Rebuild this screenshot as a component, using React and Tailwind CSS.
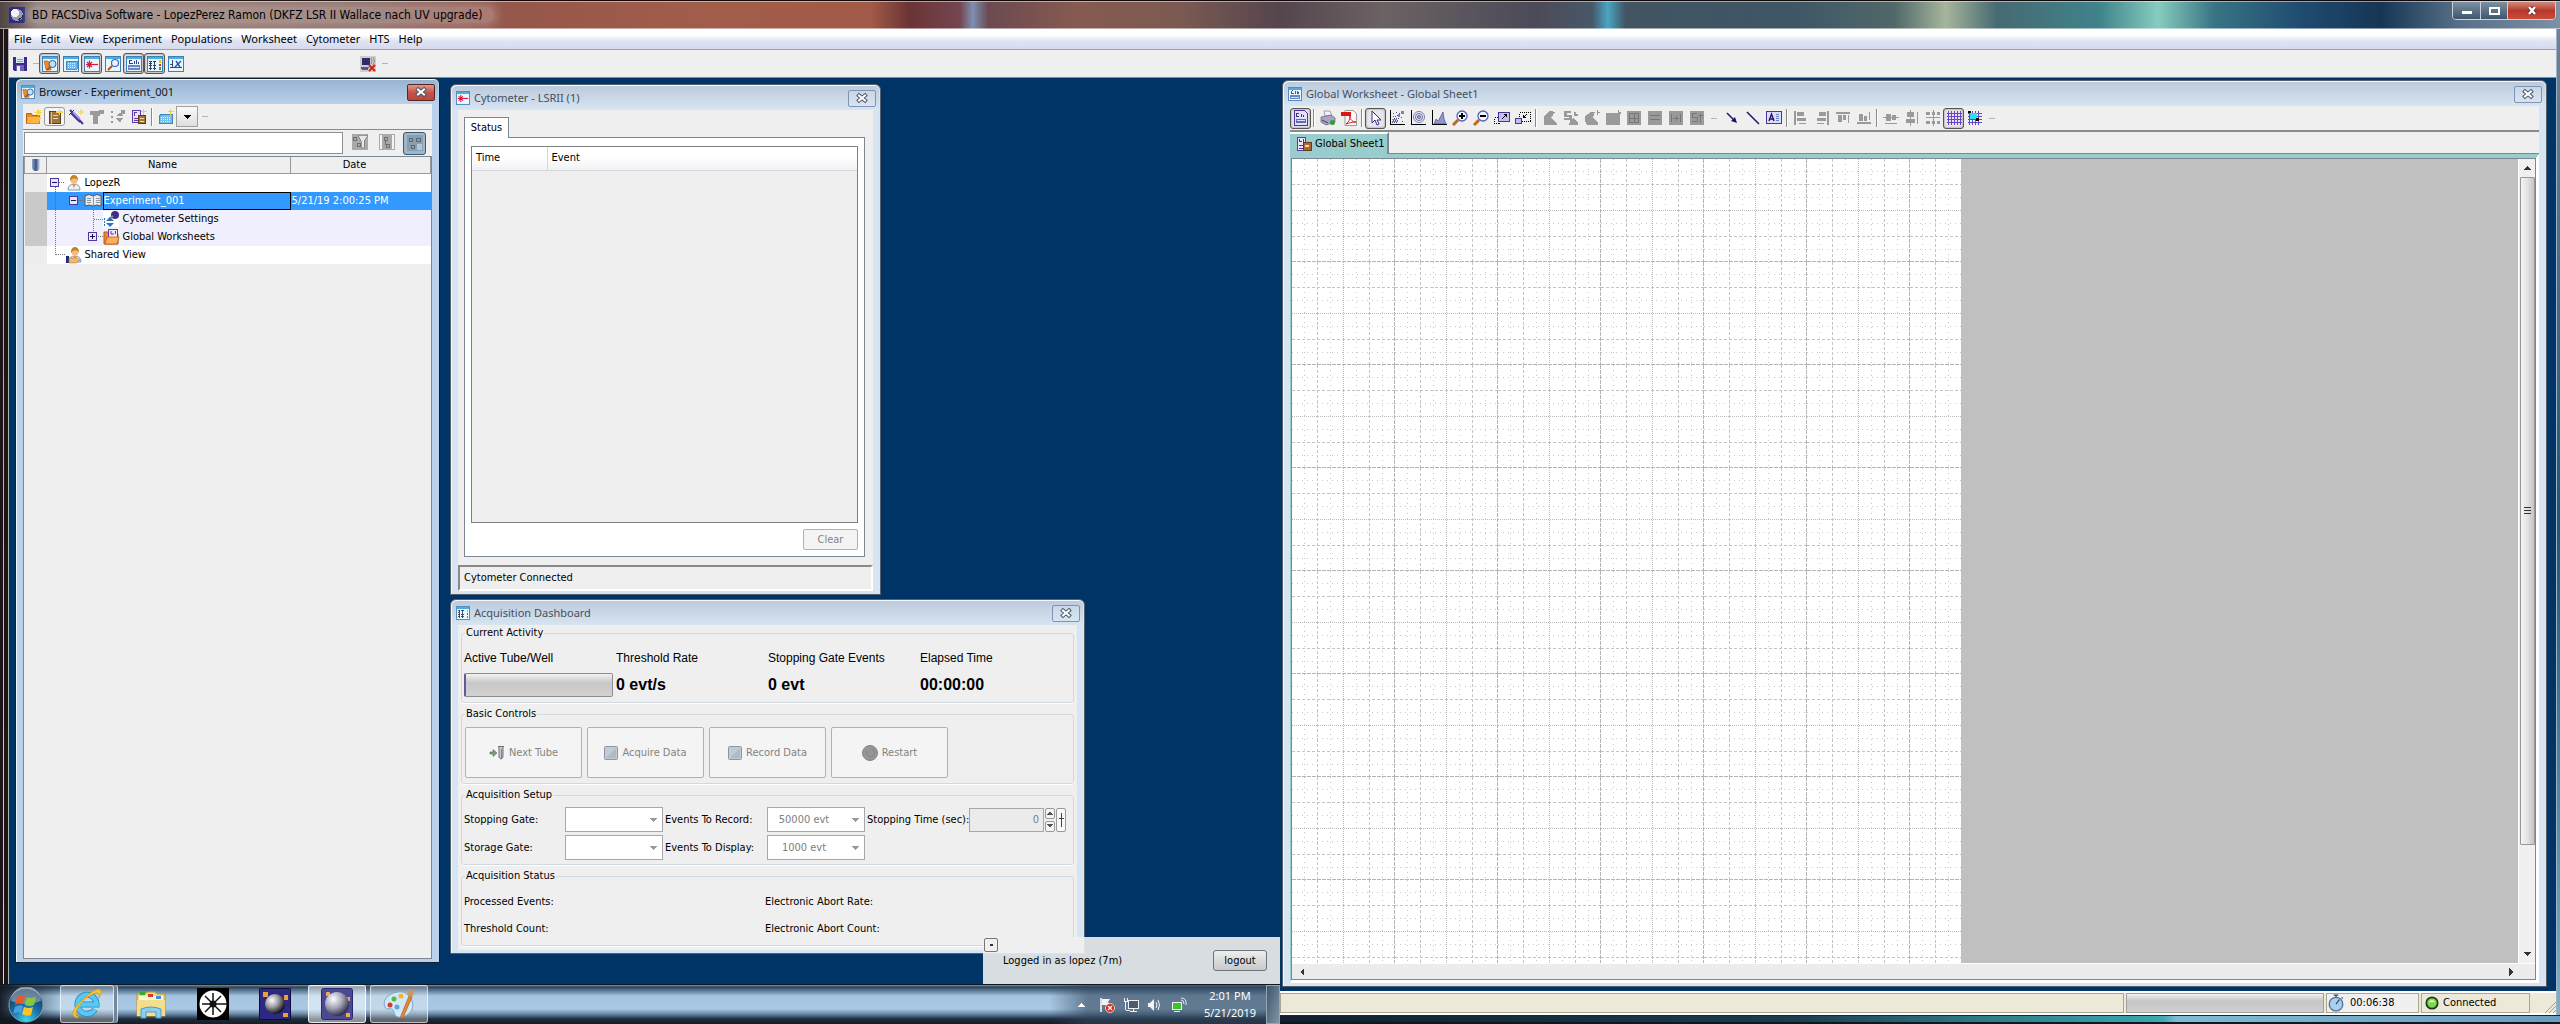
import React from 'react';

/* ---------- small drawing helpers ---------- */

function Ico({ size = 16, box = 16, crisp = true, className = '', children }) {
  return (
    <svg
      aria-hidden="true"
      width={size}
      height={size}
      viewBox={`0 0 ${box} ${box}`}
      shapeRendering={crisp ? 'crispEdges' : 'auto'}
      fill="none"
      className={`shrink-0 ${className}`}
    >
      {children}
    </svg>
  );
}

const Panel = ({ children }) => (
  <>
    <rect x="0.5" y="0.5" width="15" height="15" fill="#eaf6fd" stroke="#3f7fb4" />
    <rect x="1" y="1" width="14" height="2" fill="#43b0e6" />
    {children}
  </>
);

const GRAY = '#9a9a9a';

const icons = {
  diva: (
    <>
      <rect width="16" height="16" rx="2" fill="#2b2b88" />
      <circle cx="8" cy="8" r="6" fill="#9a9aa8" />
      <circle cx="6" cy="6" r="4" fill="#f2f2f8" />
      <path d="M9 13a6 6 0 0 0 5-6c0 3-4 4-5 6z" fill="#222" />
    </>
  ),
  save: (
    <>
      <path d="M1 1h14v14H2l-1-1z" fill="#3b2a86" />
      <rect x="4" y="1" width="8" height="6" fill="#dceaf4" />
      <path d="M5 3h6M5 5h6" stroke="#7fa6b8" />
      <rect x="4" y="9" width="8" height="6" fill="#6f62b4" />
      <rect x="5" y="10" width="3" height="5" fill="#eee" />
    </>
  ),
  browser: (
    <Panel>
      <g shapeRendering="auto">
        <path d="M2 5h4l1 2h2v7H4z" fill="#f08a24" stroke="#b85a10" strokeWidth="0.6" />
        <path d="M8 11l-3 3" stroke="#a85a18" strokeWidth="2" />
        <circle cx="10.500" cy="8" r="3.500" fill="#bfe0f8" stroke="#3a5a8a" />
      </g>
    </Panel>
  ),
  plate: (
    <Panel>
      <path d="M4 5h10v8H3V7z" fill="#6fb7e8" stroke="#2f7ab8" strokeWidth="0.8" />
      <path d="M5 7h8M5 9h8M5 11h8" stroke="#d9f0ff" strokeDasharray="1 1" />
    </Panel>
  ),
  laser: (
    <Panel>
      <g shapeRendering="auto">
        <path d="M2 8.500h12" stroke="#e0133c" strokeWidth="1.200" />
        <path d="M5.500 4.500v8M3 6l5 5M8 6l-5 5" stroke="#e0133c" strokeWidth="1.200" />
      </g>
    </Panel>
  ),
  inspect: (
    <Panel>
      <g shapeRendering="auto">
        <circle cx="10" cy="7" r="3.500" fill="#e4f3ff" stroke="#4a62c0" strokeWidth="1.200" />
        <path d="M7 10l-4 4" stroke="#a65420" strokeWidth="2" />
      </g>
    </Panel>
  ),
  sheet: (
    <Panel>
      <path d="M3.500 4v4M4 4.500h2M4 7.500h3M8.500 8V5M10.500 8V4M12.500 8V6" stroke="#3a3a9c" />
      <rect x="2" y="9" width="12" height="5" fill="#6c86c4" />
      <path d="M3 11.500h10" stroke="#dce6f8" />
    </Panel>
  ),
  dash: (
    <Panel>
      <path d="M2 5.500h3M6 5.500h3M2 7.500h1M4 7.500h1M2 9.500h3M6 9.500h3M6 12.500h3M2 12.500h3M3.500 5v9M7.500 5v9" stroke="#30405a" />
      <rect x="12" y="4" width="2" height="3" fill="#e0c020" />
      <rect x="12" y="8" width="2" height="2" fill="#d03030" />
      <rect x="12" y="11" width="2" height="3" fill="#35a835" />
    </Panel>
  ),
  bio: (
    <Panel>
      <path d="M4.500 4v8M2 11.500h12M2 8.500h3" stroke="#2f4a8c" />
      <path d="M8 5l4 6M13 5l-6 6" stroke="#2454b0" strokeWidth="1.400" shapeRendering="auto" />
    </Panel>
  ),
  modem: (
    <>
      <rect width="16" height="16" fill="#cfcbc6" />
      <rect x="2" y="2" width="8" height="7" fill="#2c2c6e" />
      <path d="M1 11h8l-1 3H2z" fill="#565690" />
      <path d="M11 2q2 3 0 6M13 1q3 4 0 8" stroke="#8a8a8a" shapeRendering="auto" />
      <path d="M9 9l6 6M15 9l-6 6" stroke="#d81c1c" strokeWidth="2" shapeRendering="auto" />
    </>
  ),
  folderNew: (
    <g shapeRendering="auto">
      <path d="M0.500 4.500h5l1 2h7v8h-13z" fill="#f08a1c" stroke="#c0600c" />
      <path d="M2 8h13l-2 6.500H1z" fill="#ffb648" />
      <path d="M12.500 0v7M9 3.500h7M10 1l5 5M15 1l-5 5" stroke="#f6d642" />
    </g>
  ),
  bookNew: (
    <>
      <path d="M2.500 2.500h11v12h-11z" fill="#9c7540" stroke="#5e4018" />
      <path d="M4.500 3v12" stroke="#d8c296" />
      <path d="M6 6.500h5M6 9.500h5" stroke="#e8d6b0" />
      <path d="M12.500 0v6M9 3h7" stroke="#f6d642" strokeWidth="1.500" />
    </>
  ),
  syringe: (
    <g shapeRendering="auto">
      <path d="M3 4l9 9M2 1l13 14" stroke="#4a35a0" strokeWidth="2" />
      <path d="M5 3l7 7" stroke="#a99be0" strokeWidth="2" />
      <path d="M1 6l5-5" stroke="#3a2a80" />
      <path d="M13 0v6M10 3h6" stroke="#f2cf36" />
    </g>
  ),
  tubeGray: <path d="M1 2h9V1h5v4h-4v2H9v8H4V6H1z" fill={GRAY} />,
  settingsGray: (
    <path d="M1 2h2v2H1zM1 7h2v2H1zM1 12h2v2H1zM6 7h7l-3-3zM6 9h7l-3 5zM11 1h4v4h-4z" fill={GRAY} />
  ),
  sheetNew: (
    <>
      <path d="M1.500 1.500h8v12h-8z" fill="#e9e4fa" stroke="#5a3aa8" />
      <path d="M3 3.500h3M3.500 4v3M3 9.500h4M3 11.500h4" stroke="#5a3aa8" />
      <path d="M7.500 6.500h7v8h-7z" fill="#a5723a" stroke="#603c12" />
      <path d="M9 9.500h4M9 12.500h4" stroke="#ecd8b0" />
      <path d="M12.500 0v6M10 2.500h6" stroke="#f2cf36" />
    </>
  ),
  plateNew: (
    <>
      <path d="M2.500 5.500h12v9h-13v-7z" fill="#78bfe9" stroke="#3b86bd" />
      <path d="M3 8.500h10M3 10.500h10M3 12.500h10" stroke="#e0f4ff" strokeDasharray="1 1" />
      <path d="M12.500 0v6M10 2.500h6" stroke="#f2cf36" />
    </>
  ),
  filter: (
    <>
      <rect width="16" height="16" fill="#a9a9a9" />
      <path d="M1 3h3v3H1zM5 9h3v3H5z" stroke="#707070" />
      <path d="M6 1h10l-4 6v8l-3-2V7z" fill="#e6e6e6" stroke="#777" strokeWidth="0.700" />
    </>
  ),
  treeGray: (
    <>
      <rect x="0.500" y="0.500" width="15" height="15" fill="#f4f4f4" stroke="#aaa" />
      <rect x="3" y="1" width="10" height="14" fill="#a9a9a9" />
      <path d="M5 3h3v3H5zM7 10h3v3H7zM6 6v5" stroke="#6e6e6e" />
    </>
  ),
  treeBlue: (
    <>
      <rect width="16" height="16" fill="#8c9dab" />
      <path d="M2.500 3.500h3v3h-3zM4.500 10.500h3v3h-3zM9.500 3.500h4v3h-4z" stroke="#566a7a" />
      <path d="M10 9h5v6h-5z" fill="#a9cbe2" />
    </>
  ),
  page: (
    <>
      <path d="M1.500 0.500h10l3 3v12h-13z" fill="#e6e1fa" stroke="#4a34a0" />
      <path d="M3.500 3v4M4 3.500h2M4 6.500h2M8.500 7V4M10.500 7V5" stroke="#3a3490" />
      <rect x="3" y="9" width="10" height="4" fill="#5a6cba" />
      <path d="M4 10.500h8" stroke="#e0e4fa" />
    </>
  ),
  print: (
    <g shapeRendering="auto">
      <path d="M4 1h6l2 5H5z" fill="#f2f0fa" stroke="#8a86a8" strokeWidth="0.800" />
      <path d="M1 7l10-2 4 3v4l-9 3-5-3z" fill="#a8a4c4" stroke="#6a6888" strokeWidth="0.800" />
      <path d="M2 10l6 3" stroke="#444" />
      <circle cx="12.500" cy="12.500" r="2.500" fill="#2aa030" />
    </g>
  ),
  pdf: (
    <g shapeRendering="auto">
      <path d="M4 0.500h8l3.500 3v12H4z" fill="#fafafa" stroke="#999" />
      <rect x="0" y="2" width="10" height="4" fill="#dc1414" />
      <path d="M5 14c3-2 4-5 4-8 0 4 3 6 6 6-4 0-7 1-10 2z" stroke="#d42020" />
    </g>
  ),
  cursor: <path d="M4 1v12l3-3 2 5 2-1-2-4h4z" fill="#fff" stroke="#3a2c90" shapeRendering="auto" />,
  dot: (
    <>
      <path d="M1.500 0v14.500H16" stroke="#000" />
      <path d="M3 12.500h5M4 10.500h6M5 8.500h6M4 6.500h4M8 5.500h4M10 3.500h2M13 2.500h2M12 7.500h2M4 3.500h1M7 2.500h1M13 11.500h1" stroke="#4a4a86" strokeDasharray="1 1" />
      <path d="M3 11.500h6M3 9.500h5" stroke="#8888bc" />
      <path d="M12 1h3v3h-3zM9 4h2v3H9z" fill="#8080b8" />
    </>
  ),
  contour: (
    <>
      <path d="M1.500 0v14.500H16" stroke="#000" />
      <g shapeRendering="auto">
        <circle cx="9" cy="7" r="5.500" stroke="#7c7cb8" />
        <circle cx="9" cy="7" r="3.500" stroke="#6464a8" />
        <circle cx="9" cy="7" r="1.500" fill="#aab0dc" stroke="#6464a8" />
      </g>
    </>
  ),
  hist: (
    <>
      <path d="M3 14l2-5 2 2 3-5 2-4 1 7 2 5z" fill="#8e96d2" stroke="#4a4a96" strokeWidth="0.700" shapeRendering="auto" />
      <path d="M1.500 0v14.500H16" stroke="#000" />
    </>
  ),
  zoomIn: (
    <g shapeRendering="auto">
      <path d="M6 10l-5 5" stroke="#c4661c" strokeWidth="3" />
      <circle cx="10" cy="6" r="5" fill="#eef6ff" stroke="#5a62b8" strokeWidth="1.300" />
      <path d="M7 6h6M10 3v6" stroke="#000" strokeWidth="2" />
    </g>
  ),
  zoomOut: (
    <g shapeRendering="auto">
      <path d="M6 10l-5 5" stroke="#c4661c" strokeWidth="3" />
      <circle cx="10" cy="6" r="5" fill="#eef6ff" stroke="#5a62b8" strokeWidth="1.300" />
      <path d="M7 6h6" stroke="#000" strokeWidth="2" />
    </g>
  ),
  scaleUp: (
    <>
      <path d="M0.500 7.500h5v6h-5z" stroke="#000" strokeDasharray="1 1" />
      <rect x="4.500" y="2.500" width="11" height="9" fill="#c4c0ee" stroke="#4236a0" />
      <path d="M8 9l4-4M10 4.500h3M12.500 4v3" stroke="#000" />
    </>
  ),
  scaleDown: (
    <>
      <path d="M4.500 2.500h11v9h-11z" stroke="#000" strokeDasharray="1 1" />
      <rect x="0.500" y="8.500" width="6" height="5" fill="#c4c0ee" stroke="#4236a0" />
      <path d="M12 4L9 7M8.500 5v3M8 7.500h3" stroke="#000" />
    </>
  ),
  g1: <path d="M2 6l6-5 5 1-4 6 6 5v2H2z" fill={GRAY} />,
  g2: <path d="M1 1h7v2H4v2h5v5H1V8h5V7H1zM11 2h2v2h2v2h-4zM8 9l3-1 4 5v2H6z" fill={GRAY} />,
  g3: <path d="M1 6l6-4h4l-2 6 5 5v2H3l-2-4zM13 0h1v2h2v1h-2v2h-1z" fill={GRAY} />,
  g4: <path d="M1 3h14v12H1zM13 0h1v2h2v2h-3z" fill={GRAY} />,
  g5: (
    <>
      <rect x="1" y="1" width="14" height="14" fill={GRAY} />
      <path d="M3.500 3.500h9v9h-9zM8.500 3v10M3 8.500h10" stroke="#777" />
    </>
  ),
  g6: (
    <>
      <rect x="1" y="1" width="14" height="14" fill={GRAY} />
      <path d="M3 5.500h10M3 9.500h10" stroke="#777" />
    </>
  ),
  g7: (
    <>
      <rect x="1" y="1" width="14" height="14" fill={GRAY} />
      <path d="M3.500 4v8M12.500 4v8M5 8.500h6M8.500 6v5" stroke="#777" />
    </>
  ),
  g8: (
    <>
      <rect x="1" y="1" width="14" height="14" fill={GRAY} />
      <path d="M8 3.500H3.500v4H8v4H3M11.500 3v10M9 5.500h5" stroke="#777" />
    </>
  ),
  arrow: (
    <g shapeRendering="auto">
      <path d="M3 3l7 7" stroke="#241466" strokeWidth="1.500" />
      <path d="M13 13l-6-2 4-4z" fill="#241466" />
    </g>
  ),
  line: <path d="M2 2l12 12" stroke="#241466" strokeWidth="1.500" shapeRendering="auto" />,
  text: (
    <>
      <rect x="0.500" y="1.500" width="15" height="12" fill="#dcdcf8" stroke="#4a34a0" />
      <path d="M3 11l2.500-7L8 11M4 9h4" stroke="#241466" strokeWidth="1.400" shapeRendering="auto" />
      <path d="M10 4.500h3M10 6.500h3M10 8.500h3M10 10.500h3" stroke="#6a80c8" />
    </>
  ),
  a1: <path d="M1 1h2v14H1zM4 2h7v4H4zM4 8h9v3H4zM6 13h7v1H6z" fill={GRAY} />,
  a2: <path d="M13 1h2v14h-2zM5 2h7v4H5zM3 8h9v3H3zM3 13h7v1H3z" fill={GRAY} />,
  a3: <path d="M1 2h14v2H1zM3 5h4v7H3zM8 5h3v5H8zM13 5h1v8h-1z" fill={GRAY} />,
  a4: <path d="M1 12h14v2H1zM3 4h4v7H3zM8 6h3v5H8zM13 2h1v8h-1z" fill={GRAY} />,
  a5: <path d="M3 4h5v7H3zM9 5h4v5H9zM0 7h16v1H0zM2 13h12v1H2z" fill={GRAY} />,
  a6: <path d="M3 2h7v5H3zM2 9h9v4H2zM6 0h1v16H6zM13 2h1v12h-1z" fill={GRAY} />,
  a7: <path d="M1 2h4v3H1zM7 2h3v3H7zM12 2h3v3h-3zM1 7h14v1H1zM1 11h4v3H1zM7 11h3v3H7zM12 11h3v3h-3zM8 0h1v16H8z" fill={GRAY} />,
  grid: <path d="M2.500 1v14M5.500 1v14M8.500 1v14M11.500 1v14M14.500 1v14M1 3.500h15M1 6.500h15M1 9.500h15M1 12.500h15" stroke="#6a44cc" />,
  snap: (
    <>
      <path d="M2.500 1v14M5.500 1v14M8.500 1v14M11.500 1v14M1 3.500h14M1 6.500h14M1 9.500h14M1 12.500h14" stroke="#6a44cc" />
      <rect x="3" y="3" width="7" height="6" fill="#30dcf0" />
      <path d="M1 1h3v2H1zM9 8h3v3H9z" fill="#000" />
    </>
  ),
  sheetTab: (
    <>
      <path d="M1.500 1.500h8v13h-8z" fill="#e9e4fa" stroke="#5a3aa8" />
      <path d="M3.500 3v3M4 5.500h2M7.500 6V3M3 9.500h4M3 12.500h4" stroke="#4a34a0" />
      <path d="M7.500 6.500h8v8h-8z" fill="#b0652c" stroke="#603c12" />
      <path d="M9 9h4v2H9z" fill="#f0d8a0" />
    </>
  ),
};

const I = ({ n, size = 16, className }) => (
  <Ico size={size} className={className}>{icons[n]}</Ico>
);

function ToolBtn({ n, label, pressed, disabled }) {
  return (
    <button
      type="button"
      aria-label={label}
      disabled={disabled}
      className={
        pressed
          ? 'flex h-[21px] w-[21px] shrink-0 items-center justify-center rounded-[3px] border border-[#555] bg-[#e6e6ea] shadow-[inset_0_0_2px_#777]'
          : 'flex h-[21px] w-[21px] shrink-0 items-center justify-center'
      }
    >
      <I n={n} />
    </button>
  );
}

const Sep = () => <span className="mx-[2px] h-[18px] w-[2px] shrink-0 border-l border-[#8a8a8a] bg-white" />;
const Nub = () => <span className="mx-1 h-px w-[6px] shrink-0 bg-[#b4b4b4]" />;

/* ---------- MDI window ---------- */

function CloseBtn({ active }) {
  return (
    <button
      type="button"
      aria-label="Close"
      className={
        active
          ? 'flex h-[17px] w-7 items-center justify-center rounded-[2px] border border-[#5a2420] bg-linear-to-b from-[#dc9a8e] via-[#c4544a] to-[#b8483c]'
          : 'flex h-[17px] w-7 items-center justify-center rounded-[2px] border border-[#7f93b2] bg-linear-to-b from-[#c8d6e6] to-[#d8e4f2]'
      }
    >
      <Ico size={12} box={12} crisp={false}>
        <path d="M3 3.500l6 5M9 3.500l-6 5" stroke="#4a5562" strokeWidth="4" strokeLinecap="square" />
        <path d="M3 3.500l6 5M9 3.500l-6 5" stroke="#fff" strokeWidth="2" strokeLinecap="square" />
      </Ico>
    </button>
  );
}

function Win({ title, icon, active, className, bodyClass, children }) {
  return (
    <section
      aria-label={title}
      className={`flex flex-col rounded-t-md border px-[7px] pb-[3px] shadow-[inset_1px_1px_0_#f4f8fc] ${
        active ? 'border-[#10202c] bg-[#b9d1ea]' : 'border-[#55606c] bg-[#d7e4f2]'
      } ${className}`}
    >
      <header
        className={`-mx-[6px] mt-px flex h-6 shrink-0 items-center rounded-t-[5px] pr-[3px] pl-1 ${
          active ? 'bg-linear-to-b from-[#98b4d2] to-[#b9d1ea]' : 'bg-linear-to-b from-[#bccbdc] to-[#d7e4f2]'
        }`}
      >
        <I n={icon} size={14} />
        <h2
          className={`ml-1 flex-1 font-['Noto_Sans',sans-serif] text-[11px] leading-4 ${
            active ? 'text-[#101820]' : 'text-[#45505c]'
          }`}
        >
          {title}
        </h2>
        <CloseBtn active={active} />
      </header>
      <div className={`flex min-h-0 flex-1 flex-col bg-[#efefef] ${bodyClass || ''}`}>{children}</div>
    </section>
  );
}

/* ---------- top of the application ---------- */

function TitleBar() {
  return (
    <div className="flex h-[29px] shrink-0 items-start border-t border-[#120808] bg-[linear-gradient(90deg,#4f4644_0%,#8d7a76_1.5%,#93766e_8%,#8d6e68_14%,#96564a_20%,#a15d4b_27%,#a35a48_34%,#6b3436_35.5%,#744650_37.5%,#7d8fb0_38%,#6c4a50_38.6%,#865a50_42%,#7c5a52_46%,#54454e_50%,#6b6264_54%,#4c4a58_60%,#485868_62.2%,#4aa4c4_62.8%,#435462_63.5%,#3e5666_70%,#506869_74%,#a6b59c_76%,#476a72_78%,#3f838c_82%,#86ccbe_84.3%,#387484_86.5%,#1f4a70_90%,#163654_93%,#566f88_96%,#7d90a4_100%)] pl-[9px] shadow-[inset_0_1px_0_rgba(255,255,255,0.5),inset_0_-1px_0_rgba(255,255,255,0.5)]">
      <div className="flex h-full flex-1 items-center">
        <I n="diva" />
        <h1 className="ml-[3px] rounded-full bg-white/20 pr-3 pl-1 font-['DejaVu_Sans_Condensed','DejaVu_Sans',sans-serif] text-xs leading-4 text-black shadow-[0_0_10px_4px_rgba(255,255,255,0.2)]">
          BD FACSDiva Software - LopezPerez Ramon (DKFZ LSR II Wallace nach UV upgrade)
        </h1>
      </div>
      <div className="mr-1 flex h-[19px] overflow-hidden rounded-b-[4px] border border-[#c8d2dc]">
        <button type="button" aria-label="Minimize" className="flex w-7 items-center justify-center border-r border-[#c8d2dc] bg-linear-to-b from-[#7d90a4] to-[#3f566c]">
          <span className="mt-1 h-[3px] w-[10px] bg-white" />
        </button>
        <button type="button" aria-label="Restore" className="flex w-[27px] items-center justify-center border-r border-[#c8d2dc] bg-linear-to-b from-[#7d90a4] to-[#3f566c]">
          <span className="h-2 w-[11px] border-2 border-white" />
        </button>
        <button type="button" aria-label="Close" className="flex w-[47px] items-center justify-center bg-linear-to-b from-[#d08a7c] via-[#b8382c] to-[#c84c38]">
          <Ico size={12} box={12} crisp={false}>
            <path d="M3 2l6 7M9 2l-6 7" stroke="#5a2a28" strokeWidth="4" />
            <path d="M3 2l6 7M9 2l-6 7" stroke="#fff" strokeWidth="2.400" />
          </Ico>
        </button>
      </div>
    </div>
  );
}

const MENU = ['File', 'Edit', 'View', 'Experiment', 'Populations', 'Worksheet', 'Cytometer', 'HTS', 'Help'];

function MenuBar() {
  return (
    <nav className="flex h-[21px] shrink-0 items-center gap-[9px] border-b border-[#a0a0a0] bg-linear-to-b from-white from-30% via-[#dfe4f4] via-60% to-[#d6daee] pl-[5px]">
      {MENU.map((m) => (
        <button key={m} type="button" className="font-['Noto_Sans',sans-serif] text-[11px] leading-4">
          {m}
        </button>
      ))}
    </nav>
  );
}

function MainToolbar() {
  return (
    <div className="flex h-7 shrink-0 items-center border-b border-[#8a8a8a] bg-[#efefef] pl-[3px]">
      <button type="button" aria-label="Save" className="flex h-[21px] w-[17px] items-center"><I n="save" /></button>
      <Nub />
      <span className="-ml-1 flex">
        <ToolBtn n="browser" label="Browser" pressed />
        <ToolBtn n="plate" label="Plate" />
        <ToolBtn n="laser" label="Cytometer" pressed />
        <ToolBtn n="inspect" label="Inspector" />
        <ToolBtn n="sheet" label="Worksheet" pressed />
        <ToolBtn n="dash" label="Acquisition Dashboard" pressed />
        <ToolBtn n="bio" label="Biexponential Editor" />
      </span>
      <span className="ml-[171px] flex items-center">
        <ToolBtn n="modem" label="Disconnected" />
        <Nub />
      </span>
    </div>
  );
}

/* ---------- browser ---------- */

const dotted = { stroke: '#777', strokeDasharray: '1 1' };

function Box({ x, plus }) {
  return (
    <>
      <rect x={x - 4.5} y="4.500" width="8" height="8" rx="1" fill="#e9e6fb" stroke="#4a3aa0" />
      <path d={`M${x - 3} 8.500h5`} stroke="#1c1050" />
      {plus && <path d={`M${x - 0.5} 6v5`} stroke="#1c1050" />}
    </>
  );
}

function Person({ x }) {
  return (
    <g transform={`translate(${x} 1)`} shapeRendering="auto">
      <path d="M1 15q0-6 6-6t6 6z" fill="#e8f2fa" stroke="#7a98b4" />
      <path d="M5 9h4l-2 4z" fill="#e89840" />
      <circle cx="7" cy="5" r="3.500" fill="#f2bc84" />
      <path d="M3 6c-1-8 9-8 8 0-1-3-5-4-8 0z" fill="#c08420" />
    </g>
  );
}

const TreeArt = ({ w, children }) => (
  <svg aria-hidden="true" width={w} height="18" viewBox={`0 0 ${w} 18`} fill="none" shapeRendering="crispEdges" className="shrink-0">
    {children}
  </svg>
);

const ROWS = [
  {
    name: 'LopezR', bg: 'bg-white', mark: 'bg-[#ededed]',
    art: (
      <TreeArt w="36">
        <path d="M12 8.500h6M8.500 13v5" {...dotted} />
        <Box x={8} />
        <Person x={20} />
      </TreeArt>
    ),
  },
  {
    name: 'Experiment_001', date: '5/21/19 2:00:25 PM', bg: 'bg-[#3399ff] text-white', mark: 'bg-[#c9c9c9]', selected: true,
    art: (
      <TreeArt w="56">
        <path d="M8.500 0v18M31 8.500h6" stroke="#5c6c88" strokeDasharray="1 1" />
        <Box x={27} />
        <path d="M38 14V4q4-3 8 0 4-3 8 0v10q-4-2-8 0-4-2-8 0z" fill="#e6ecf2" stroke="#66543c" shapeRendering="auto" />
        <path d="M46.500 4v10M40 6.500h4M40 8.500h4M40 10.500h4M49 6.500h4M49 8.500h4M49 10.500h4" stroke="#8a9aa8" />
      </TreeArt>
    ),
  },
  {
    name: 'Cytometer Settings', bg: 'bg-[#efeffd]', mark: 'bg-[#c9c9c9]',
    art: (
      <TreeArt w="74">
        <path d="M8.500 0v18M46.500 0v18M47 9.500h10" {...dotted} />
        <rect x="56" y="1" width="16" height="16" fill="#fff" />
        <g shapeRendering="auto">
          <circle cx="68" cy="5" r="4" fill="#3c2c8c" />
          <path d="M62 9l4-3" stroke="#888" strokeWidth="2" />
          <path d="M59 11h8l-4-4zM59 13h8l-4 4z" fill="#2a72b8" />
        </g>
        <path d="M57.500 8v9" stroke="#2a72b8" strokeDasharray="2 1" />
      </TreeArt>
    ),
  },
  {
    name: 'Global Worksheets', bg: 'bg-[#efeffd]', mark: 'bg-[#c9c9c9]',
    art: (
      <TreeArt w="74">
        <path d="M8.500 0v18M46.500 0v4M51 8.500h6" {...dotted} />
        <Box x={46} plus />
        <g shapeRendering="auto">
          <path d="M57 16V4h4l1 2h9v10z" fill="#f08a2c" stroke="#b05a14" />
          <rect x="61.500" y="1.500" width="9" height="8" fill="#efe8fb" stroke="#6a3ab0" />
          <path d="M64 3v3h3M68.500 6V3" stroke="#7a2a9a" />
          <path d="M58 16l2-7h12l-2 7z" fill="#ffae5c" stroke="#b8500c" strokeWidth="0.700" />
        </g>
      </TreeArt>
    ),
  },
  {
    name: 'Shared View', bg: 'bg-white', mark: 'bg-[#ededed]',
    art: (
      <TreeArt w="36">
        <path d="M8.500 0v9M9 8.500h10" {...dotted} />
        <Person x={21} />
        <path d="M19 10h3v7h-3z" fill="#1c2c78" />
        <path d="M22 12h8l3 2-4 3h-7z" fill="#f0b878" stroke="#b07838" strokeWidth="0.600" shapeRendering="auto" />
      </TreeArt>
    ),
  },
];

function BrowserWindow() {
  return (
    <Win title="Browser - Experiment_001" icon="browser" active className="absolute top-0 bottom-[21px] left-[6px] w-[425px]">
      <div className="flex h-[26px] shrink-0 items-center border-b border-[#8a8a8a]">
        <ToolBtn n="folderNew" label="New Folder" />
        <button type="button" aria-label="New Experiment" className="flex h-[19px] w-[21px] items-center justify-center rounded-[3px] border border-[#999] bg-[#f6f6f6]">
          <I n="bookNew" />
        </button>
        <ToolBtn n="syringe" label="New Specimen" />
        <ToolBtn n="tubeGray" label="New Tube" disabled />
        <ToolBtn n="settingsGray" label="New Cytometer Settings" disabled />
        <ToolBtn n="sheetNew" label="New Global Worksheet" />
        <Sep />
        <ToolBtn n="plateNew" label="New Plate" />
        <button type="button" aria-label="Plate type" className="flex h-[21px] w-[22px] items-center justify-center border border-[#a0a0a0] bg-linear-to-b from-[#fafafa] to-[#dedede]">
          <Ico size={8} box={8}><path d="M0 2h8L4 6z" fill="#000" /></Ico>
        </button>
        <Nub />
      </div>
      <div className="flex h-[26px] shrink-0 items-center pr-[6px] pl-px">
        <input type="text" aria-label="Search" className="h-[22px] min-w-0 flex-1 border border-[#8f8f8f] bg-white px-1 text-[11px]" />
        <span className="ml-[6px] flex gap-[6px]">
          <ToolBtn n="filter" label="Filter" disabled />
          <ToolBtn n="treeGray" label="Collapse tree" disabled />
          <span className="flex rounded-[3px] border border-[#3a5a74] bg-[#9db8cc]"><ToolBtn n="treeBlue" label="Sync tree" /></span>
        </span>
      </div>
      <div className="min-h-0 flex-1 border border-[#7c8792]">
        <table className="w-full table-fixed border-collapse">
          <colgroup>
            <col className="w-[22px]" />
            <col className="w-[244px]" />
            <col />
          </colgroup>
          <thead>
            <tr className="h-4">
              <th className="border border-t-0 border-[#999] p-0" aria-label="Tube">
                <span className="mx-auto block h-3 w-2 rounded-b bg-linear-to-r from-[#8fa8c8] via-[#3a5080] to-[#dfe8f4]" />
              </th>
              <th className="border-r border-b border-[#999] p-0 pr-3 font-normal">Name</th>
              <th className="border-r border-b border-[#999] p-0 pr-3 font-normal">Date</th>
            </tr>
          </thead>
          <tbody>
            {ROWS.map((r) => (
              <tr key={r.name} className={`h-[18px] ${r.bg}`}>
                <td className={`p-0 ${r.mark}`} />
                <td className="p-0">
                  <div className="flex h-[18px] items-center">
                    {r.art}
                    <span className={r.selected ? 'flex h-[18px] flex-1 items-center border border-black' : 'pl-[2px]'}>{r.name}</span>
                  </div>
                </td>
                <td className="p-0 pl-px">{r.date}</td>
              </tr>
            ))}
          </tbody>
        </table>
      </div>
    </Win>
  );
}

/* ---------- cytometer ---------- */

function CytometerWindow() {
  return (
    <Win title="Cytometer - LSRII (1)" icon="laser" className="absolute top-[6px] left-[441px] h-[511px] w-[431px]">
      <div className="flex min-h-0 flex-1 flex-col px-[6px] pt-[7px] pb-2">
        <div role="tablist" className="z-10 -mb-px flex">
          <button role="tab" type="button" aria-selected="true" className="h-[21px] w-[45px] border border-b-0 border-[#7c8792] bg-white leading-4">
            Status
          </button>
        </div>
        <div className="mr-[2px] flex min-h-0 flex-1 flex-col border border-[#7c8792] bg-white p-[6px] pt-[8px]">
          <div className="min-h-0 flex-1 border border-[#7c7f84] bg-[#efefef]">
            <table className="w-full table-fixed border-collapse">
              <thead>
                <tr className="h-[23px] bg-linear-to-b from-white from-40% to-[#f1f2f5] text-left">
                  <th className="w-[75px] border-r border-b border-[#d5d5d5] p-0 pl-1 font-normal">Time</th>
                  <th className="border-b border-[#d5d5d5] p-0 pl-1 font-normal">Event</th>
                </tr>
              </thead>
              <tbody />
            </table>
          </div>
          <button type="button" disabled className="mt-[6px] h-[21px] w-[55px] shrink-0 self-end rounded-[2px] border border-[#adb2b5] bg-[#f4f4f4] text-[#838383]">
            Clear
          </button>
        </div>
      </div>
      <p className="flex h-[26px] shrink-0 items-center border-2 border-t-[#8a8a8a] border-r-white border-b-white border-l-[#8a8a8a] pl-1">
        Cytometer Connected
      </p>
    </Win>
  );
}

/* ---------- acquisition dashboard ---------- */

function Group({ legend, children }) {
  return (
    <fieldset className="h-[78px] min-w-0 shrink-0 rounded-[3px] border border-[#d0d9e0] pl-[2px] shadow-[0_1px_0_#fff]">
      <legend className="ml-px h-4 px-px leading-4">{legend}</legend>
      {children}
    </fieldset>
  );
}

function Reading({ label, value }) {
  return (
    <div className="font-['Liberation_Sans',Arial,sans-serif]">
      <p className="text-xs leading-4">{label}</p>
      {value ? (
        <p className="mt-[7px] text-base leading-6 font-bold">{value}</p>
      ) : (
        <div
          role="progressbar"
          aria-label={label}
          className="mt-[7px] h-6 w-[149px] rounded-[2px] border border-[#8e8e8e] border-l-2 border-l-[#5c5c9c] bg-linear-to-b from-[#f2f2f2] via-[#c8c8c8] via-40% to-[#d2d2d2]"
        />
      )}
    </div>
  );
}

function Combo({ id, value }) {
  return (
    <span className="relative flex">
      <select id={id} disabled defaultValue={value} className="h-[25px] w-[98px] appearance-none border border-[#a4a8ac] bg-white pr-6 text-center text-[#7e7e7e] opacity-100">
        <option value={value}>{value}</option>
      </select>
      <Ico size={8} box={8} className="pointer-events-none absolute top-[9px] right-2">
        <path d="M0 2h8L4 6z" fill="#9a9a9a" />
      </Ico>
    </span>
  );
}

const square = (
  <Ico size={14} box={14} crisp={false}>
    <rect x="0.500" y="0.500" width="13" height="13" rx="1" fill="#c2cad4" stroke="#8c96a2" />
    <path d="M2 12L12 2v10z" fill="#b0bac6" />
  </Ico>
);

const CONTROLS = [
  {
    label: 'Next Tube',
    icon: (
      <Ico size={16} crisp={false}>
        <path d="M1 7h3V4.500l4 3.500-4 3.500V9H1z" fill="#7c9c7c" stroke="#5a6a5a" strokeWidth="0.600" />
        <path d="M9 1.500h6M10 2v10q2 4 4 0V2" fill="#c6ccd4" stroke="#6a7078" />
        <path d="M12.500 4v9" stroke="#7a828c" />
      </Ico>
    ),
  },
  { label: 'Acquire Data', icon: square },
  { label: 'Record Data', icon: square },
  {
    label: 'Restart',
    icon: (
      <Ico size={16} crisp={false}>
        <circle cx="8" cy="8" r="7.500" fill="#969696" stroke="#858585" />
        <path d="M5 6a4 4 0 1 0 5-2" stroke="#8a8a8a" strokeWidth="1.500" />
      </Ico>
    ),
  },
];

function Dashboard() {
  return (
    <Win title="Acquisition Dashboard" icon="dash" className="absolute top-[521px] left-[441px] h-[355px] w-[635px]" bodyClass="gap-[3px] px-[3px]">
      <Group legend="Current Activity">
        <div className="grid grid-cols-[152px_152px_152px_152px] pt-[9px]">
          <Reading label="Active Tube/Well" />
          <Reading label="Threshold Rate" value="0 evt/s" />
          <Reading label="Stopping Gate Events" value="0 evt" />
          <Reading label="Elapsed Time" value="00:00:00" />
        </div>
      </Group>
      <Group legend="Basic Controls">
        <div className="flex gap-[5px] pt-[5px] pl-px">
          {CONTROLS.map((c) => (
            <button key={c.label} type="button" disabled className="flex h-[51px] w-[117px] items-center justify-center gap-1 rounded-[2px] border border-[#adb2b5] bg-[#f4f4f4] text-[#838383]">
              {c.icon}
              {c.label}
            </button>
          ))}
        </div>
      </Group>
      <Group legend="Acquisition Setup">
        <div className="grid grid-cols-[101px_100px_102px_100px_102px_75px_1fr] items-center gap-y-[3px] pt-1">
          <label htmlFor="stopGate">Stopping Gate:</label>
          <Combo id="stopGate" value="" />
          <label htmlFor="evRecord">Events To Record:</label>
          <Combo id="evRecord" value="50000 evt" />
          <label htmlFor="stopTime" className="whitespace-nowrap">Stopping Time (sec):</label>
          <input id="stopTime" type="text" disabled defaultValue="0" className="h-6 w-[75px] border border-[#a4a8ac] bg-[#ebebeb] pr-1 text-right text-[#7e7e7e]" />
          <span className="flex gap-px pl-px">
            <span className="flex flex-col gap-[2px]">
              <button type="button" aria-label="Increase" disabled className="flex h-[11px] w-[10px] items-center justify-center rounded-[2px] border border-[#999] bg-[#f4f4f4]">
                <Ico size={6} box={6}><path d="M0 5h6L3 1z" fill="#555" /></Ico>
              </button>
              <button type="button" aria-label="Decrease" disabled className="flex h-[11px] w-[10px] items-center justify-center rounded-[2px] border border-[#999] bg-[#f4f4f4]">
                <Ico size={6} box={6}><path d="M0 1h6L3 5z" fill="#555" /></Ico>
              </button>
            </span>
            <button type="button" aria-label="Set slider" disabled className="flex h-6 w-[10px] items-center justify-center rounded-[2px] border border-[#999] bg-[#f8f8f8]">
              <svg aria-hidden="true" width="6" height="14" viewBox="0 0 6 14" shapeRendering="crispEdges"><path d="M3.500 0v14M1 5.500h5" stroke="#444" /></svg>
            </button>
          </span>
          <label htmlFor="storeGate">Storage Gate:</label>
          <Combo id="storeGate" value="" />
          <label htmlFor="evDisplay">Events To Display:</label>
          <Combo id="evDisplay" value="1000 evt" />
        </div>
      </Group>
      <Group legend="Acquisition Status">
        <div className="grid grid-cols-[301px_1fr] pt-1 leading-[27px]">
          <p>Processed Events:</p>
          <p>Electronic Abort Rate:</p>
          <p>Threshold Count:</p>
          <p>Electronic Abort Count:</p>
        </div>
      </Group>
    </Win>
  );
}

function LoginPanel() {
  return (
    <aside className="absolute right-0 bottom-0 flex h-[47px] w-[297px] items-center justify-between bg-[rgba(240,240,240,0.9)] pr-[13px] pl-5">
      <p>Logged in as lopez (7m)</p>
      <button type="button" className="h-[21px] w-[54px] rounded-[3px] border border-[#70757a] bg-linear-to-b from-[#eceeef] to-[#c6cacd]">
        logout
      </button>
      <button type="button" aria-label="Hide panel" className="absolute top-px left-px flex h-[14px] w-[14px] items-center justify-center rounded-[2px] border border-[#777] bg-[#f0f0f0]">
        <span className="h-[2px] w-[3px] bg-[#333]" />
      </button>
    </aside>
  );
}

/* ---------- taskbar ---------- */

const Orb = () => (
  <svg aria-hidden="true" width="36" height="36" viewBox="0 0 36 36">
    <defs>
      <radialGradient id="orb" cx="50%" cy="95%" r="85%">
        <stop offset="0" stopColor="#38d8f0" />
        <stop offset="0.5" stopColor="#1c70a8" />
        <stop offset="1" stopColor="#123a5e" />
      </radialGradient>
    </defs>
    <circle cx="18" cy="18" r="17" fill="url(#orb)" stroke="#7ea2bc" />
    <path d="M3 14a15 15 0 0 1 30 0q-15 6-30 0z" fill="#fff" opacity="0.35" />
    <path d="M9 10q4-3 8-1l-2 8q-4-2-8 1z" fill="#e85a2a" />
    <path d="M19 10q4 2 9 0l-2 8q-5 2-9 0z" fill="#8cc63c" />
    <path d="M7 20q4-3 8-1l-2 7q-4-2-8 1z" fill="#4a9ce4" />
    <path d="M16 20q5 2 9 0l-2 8q-4 2-9-1z" fill="#fcc42c" />
  </svg>
);

const taskIcons = {
  ie: (
    <>
      <path d="M24 21.500A9.500 9.500 0 1 1 25.500 16.500H9" stroke="#1f86c4" strokeWidth="6" />
      <path d="M24 21.500A9.500 9.500 0 1 1 25.500 16.500H9" stroke="#58c8f4" strokeWidth="4.500" />
      <path d="M6 30Q-3 28 7 16 19 3 27 1q6 1 1 9 1-6-3-5Q15 8 8 18 2 28 8 29z" fill="#f6c630" stroke="#c89010" strokeWidth="0.600" />
    </>
  ),
  explorer: (
    <>
      <path d="M2 6h8l2-2h8l2 2h8v22H2z" fill="#f4d878" stroke="#b89438" />
      <path d="M4 8h24v4H4z" fill="#fdf6d4" />
      <rect x="5" y="4" width="5" height="3" fill="#34a834" />
      <rect x="13" y="6" width="5" height="3" fill="#d04030" />
      <rect x="21" y="8" width="5" height="3" fill="#3a90d8" />
      <path d="M2 12h28v16H2z" fill="#f6dd8a" />
      <path d="M6 30V21q10-4 20 0v9h-5v-6H11v6z" fill="#8ccdf0" stroke="#4a9ccc" />
    </>
  ),
  star: (
    <>
      <rect width="32" height="32" fill="#000" />
      <circle cx="16" cy="16" r="13.500" fill="#fff" />
      <path d="M16 5v22M5 16h26M8 8l16 16M24 8L8 24" stroke="#111" strokeWidth="1.500" />
      <circle cx="16" cy="16" r="3.500" fill="#111" />
    </>
  ),
  ball: (
    <>
      <defs>
        <radialGradient id="ball" cx="35%" cy="32%" r="70%">
          <stop offset="0" stopColor="#fdfdfd" />
          <stop offset="0.45" stopColor="#a4a4a8" />
          <stop offset="1" stopColor="#10101a" />
        </radialGradient>
      </defs>
      <rect x="0.500" y="0.500" width="31" height="31" rx="1" fill="#2c2884" stroke="#0e0c38" />
      <path d="M4 4h5v5H4zM25 7h4v5h-4zM24 25h5v4h-5z" fill="#f0a030" />
      <circle cx="16" cy="16" r="10" fill="url(#ball)" />
    </>
  ),
  ballActive: (
    <>
      <defs>
        <radialGradient id="ball2" cx="35%" cy="30%" r="75%">
          <stop offset="0" stopColor="#fff" />
          <stop offset="0.5" stopColor="#a4a4b8" />
          <stop offset="1" stopColor="#24243c" />
        </radialGradient>
      </defs>
      <rect x="0.500" y="0.500" width="31" height="31" rx="2" fill="#4c4894" stroke="#2a2870" />
      <path d="M5 4h4v4H5zM26 9h3v4h-3zM25 25h4v4h-4z" fill="#e8a860" />
      <circle cx="16" cy="16" r="12" fill="url(#ball2)" />
    </>
  ),
  paint: (
    <>
      <path d="M15 4C4 5-1 14 2 19c2 4 6 0 8 3s1 8 8 7c9-1 14-9 11-16S21 3 15 4z" fill="#d3e8f6" stroke="#7aa8c8" />
      <circle cx="7" cy="17" r="2.500" fill="#d83a34" />
      <circle cx="11" cy="11" r="2.500" fill="#5ab83c" />
      <circle cx="18" cy="8" r="2.500" fill="#f0b828" />
      <circle cx="14" cy="19" r="2.500" fill="#58a8e0" />
      <path d="M17 30L26 8l3 1-9 21z" fill="#e08838" stroke="#a05818" strokeWidth="0.600" />
      <path d="M24 7l2-6 6 2-3 6z" fill="#c89868" />
    </>
  ),
};

const TASKS = [
  { n: 'ie', label: 'Internet Explorer', cls: 'ml-4 w-[54px] border border-white/60 bg-white/30 rounded-[3px] shadow-[3px_0_0_rgba(90,110,130,0.8),4px_0_0_rgba(255,255,255,0.7)]' },
  { n: 'explorer', label: 'Windows Explorer', cls: 'ml-2 w-[58px]' },
  { n: 'star', label: 'Cytometry', cls: 'ml-1 w-[58px]' },
  { n: 'ball', label: 'FACSDiva', cls: 'ml-1 w-[58px]' },
  { n: 'ballActive', label: 'BD FACSDiva Software', cls: 'ml-1 w-[58px] border border-white/80 bg-white/50 rounded-[3px]' },
  { n: 'paint', label: 'Paint', cls: 'ml-1 w-[58px] border border-white/60 bg-white/30 rounded-[3px]' },
];

function Taskbar() {
  return (
    <footer className="flex h-10 shrink-0 border-t border-[#0e1822] bg-[linear-gradient(90deg,rgba(16,22,32,0.95)_0,rgba(16,22,32,0.6)_20px,transparent_60px,transparent_82%,rgba(50,70,92,0.6)_85%),linear-gradient(180deg,#7f96aa_0,#2c435a_2px,#54718c_5px,#a4c4e0_11px,#a9c8e2_24px,#6888a4_29px,#1e2b3a_34px,#131a22_40px)]">
      <button type="button" aria-label="Start" className="ml-2 flex w-9 items-center"><Orb /></button>
      {TASKS.map((t) => (
        <button key={t.n} type="button" aria-label={t.label} className={`flex h-[38px] items-center justify-center ${t.cls}`}>
          <Ico size={32} box={32} crisp={false}>{taskIcons[t.n]}</Ico>
        </button>
      ))}
      <div className="ml-auto flex items-center gap-2">
        <button type="button" aria-label="Show hidden icons" className="mr-1 flex w-3 justify-center">
          <Ico size={8} box={8}><path d="M0 6h8L4 2z" fill="#fff" /></Ico>
        </button>
        <Ico size={16} crisp={false}>
          <path d="M2 1v14" stroke="#fff" strokeWidth="1.500" />
          <path d="M3 2h8l-2 3 2 3H3z" fill="#f4f4f4" />
          <circle cx="11" cy="11" r="4.500" fill="#d8261c" stroke="#fff" strokeWidth="0.700" />
          <path d="M9 9l4 4M13 9l-4 4" stroke="#fff" strokeWidth="1.300" />
        </Ico>
        <Ico size={16}>
          <rect x="5.500" y="3.500" width="10" height="8" fill="#4c5c6c" stroke="#f0f0f0" />
          <path d="M7 14.500h7M10.500 12v2M2.500 4v9M1 1v3h3V1M2.500 13.500h4" stroke="#f0f0f0" />
        </Ico>
        <Ico size={16} crisp={false}>
          <path d="M1 6h2l4-4v12l-4-4H1z" fill="#f4f4f4" />
          <path d="M9 5q2 3 0 6M11 3q3 5 0 10" stroke="#f4f4f4" />
        </Ico>
        <Ico size={16} crisp={false}>
          <rect x="1.500" y="5.500" width="9" height="7" fill="#3cc424" stroke="#f0f0f0" />
          <path d="M3 14.500h6M10 3q3 0 3 4M10 1q6 0 5 7" stroke="#e8e8e8" />
        </Ico>
      </div>
      <div className="ml-[11px] w-[64px] text-center font-['Noto_Sans',sans-serif] text-[11px] leading-[17px] text-white">
        <p className="pt-[2px]">2:01 PM</p>
        <p>5/21/2019</p>
      </div>
      <button type="button" aria-label="Show desktop" className="ml-1 w-[14px] border border-[#93a6b6] bg-linear-to-br from-[#40566a] to-[#8096a8]" />
    </footer>
  );
}

/* ---------- global worksheet ---------- */

const TOOLS = [
  [['page', 'Worksheet view', true]],
  [['print', 'Print'], ['pdf', 'Export PDF']],
  [['cursor', 'Select', true], ['dot', 'Dot Plot'], ['contour', 'Contour Plot'], ['hist', 'Histogram'], ['zoomIn', 'Zoom In'], ['zoomOut', 'Zoom Out'], ['scaleUp', 'Enlarge'], ['scaleDown', 'Reduce']],
  [['g1', 'Auto polygon'], ['g2', 'Snap-to gate'], ['g3', 'Polygon gate'], ['g4', 'Rectangle gate'], ['g5', 'Quadrant gate'], ['g6', 'Split gate'], ['g7', 'Interval gate'], ['g8', 'Snap-to interval']],
  [['arrow', 'Arrow'], ['line', 'Line'], ['text', 'Text']],
  [['a1', 'Align left'], ['a2', 'Align right'], ['a3', 'Align top'], ['a4', 'Align bottom']],
  [['a5', 'Distribute horizontally'], ['a6', 'Distribute vertically'], ['a7', 'Tile'], ['grid', 'Show grid', true], ['snap', 'Snap to grid']],
];

function GridPaper() {
  return (
    <svg aria-hidden="true" className="block h-full w-[669px] shrink-0 bg-white" shapeRendering="crispEdges">
      <defs>
        <pattern id="paper" width="103" height="103" patternUnits="userSpaceOnUse">
          <path d="M12.500 0v103M38.500 0v103M64.500 0v103M90.500 0v103M0 12.500h103M0 38.500h103M0 64.500h103M0 90.500h103" stroke="#c8c8c8" strokeDasharray="1 4" />
          <path d="M25.500 0v103M77.500 0v103M0 25.500h103M0 77.500h103" stroke="#c4c4c4" strokeDasharray="3 2" />
          <path d="M51.500 0v103M0 51.500h103" stroke="#bcbcbc" strokeDasharray="1 1" />
          <path d="M102.500 0v103M0 102.500h103" stroke="#b4b4b4" strokeDasharray="4 1" />
        </pattern>
      </defs>
      <rect width="100%" height="100%" fill="url(#paper)" />
    </svg>
  );
}

function WorksheetWindow() {
  return (
    <Win title="Global Worksheet - Global Sheet1" icon="sheet" className="mt-[2px] mr-[9px] ml-[2px] min-h-0 flex-1">
      <div className="flex h-[26px] shrink-0 items-center border-b-2 border-[#8a8a8a]">
        {TOOLS.map((group, i) => (
          <React.Fragment key={group[0][0]}>
            {i > 0 && (i === 4 ? <Nub /> : <Sep />)}
            {group.map(([n, label, pressed]) => (
              <ToolBtn key={n} n={n} label={label} pressed={pressed} disabled={i === 3} />
            ))}
          </React.Fragment>
        ))}
        <Nub />
      </div>
      <div role="tablist" className="flex h-[22px] shrink-0 border-b border-[#7c8792]">
        <button type="button" role="tab" aria-selected="true" className="flex h-[22px] w-[99px] items-center gap-[3px] border-t-2 border-r-2 border-t-white border-r-[#7c8792] bg-[#99cccc] pl-[6px]">
          <I n="sheetTab" />
          Global Sheet1
        </button>
      </div>
      <div className="flex min-h-0 flex-1 flex-col border-t-4 border-r-3 border-b-3 border-l border-t-[#99cccc] border-r-white border-b-white border-l-[#99cccc]">
        <div className="flex min-h-0 flex-1 flex-col border border-[#7c8792]">
          <div className="flex min-h-0 flex-1">
            <div className="flex min-w-0 flex-1 bg-[#c0c0c0]">
              <GridPaper />
            </div>
            <div className="flex w-[17px] shrink-0 flex-col items-center border-l border-white bg-[#f0f0f0]">
              <button type="button" aria-label="Scroll up" className="flex h-[18px] items-center justify-center">
                <Ico size={8} box={8}><path d="M0 6h8L4 2z" fill="#333" /></Ico>
              </button>
              <div className="flex w-[15px] flex-[668] items-center justify-center rounded-[1px] border border-[#979797] bg-linear-to-r from-[#f4f4f4] via-[#e2e2e4] to-[#c4c4c8]">
                <svg aria-hidden="true" width="7" height="8" shapeRendering="crispEdges"><path d="M0 0.500h7M0 3.500h7M0 6.500h7" stroke="#333" /></svg>
              </div>
              <div className="flex-[100]" />
              <button type="button" aria-label="Scroll down" className="flex h-[18px] items-center justify-center">
                <Ico size={8} box={8}><path d="M0 2h8L4 6z" fill="#333" /></Ico>
              </button>
            </div>
          </div>
          <div className="flex h-4 shrink-0 items-center justify-between border-t border-white bg-[#ececec] pr-5 pl-[6px]">
            <button type="button" aria-label="Scroll left"><Ico size={8} box={8}><path d="M6 0v8L2 4z" fill="#333" /></Ico></button>
            <button type="button" aria-label="Scroll right"><Ico size={8} box={8}><path d="M2 0v8l4-4z" fill="#333" /></Ico></button>
          </div>
        </div>
      </div>
    </Win>
  );
}

function StatusBar() {
  return (
    <footer className="flex h-6 shrink-0 gap-[2px] border-y-2 border-y-white bg-[#ece9d8]">
      <div className="flex-1 border border-[#a8a694]" />
      <div role="progressbar" aria-label="Progress" className="w-[198px] border border-[#a0a0a0] bg-linear-to-b from-[#f2f2f2] via-[#c6c6c6] via-40% to-[#d0d0d0]" />
      <div className="flex w-[93px] items-center border border-[#a8a694] bg-[#f0f0f0]">
        <Ico size={18} crisp={false}>
          <circle cx="8" cy="9" r="6" fill="#a8d0f0" stroke="#5a7a98" strokeWidth="1.300" />
          <path d="M8 9l3-4M6 1h4M8 1v2M13 3l1 1" stroke="#2c4864" />
        </Ico>
        <span className="ml-[5px]">00:06:38</span>
      </div>
      <div className="flex w-[109px] items-center border border-[#a8a694]">
        <Ico size={14} className="ml-[3px]" crisp={false}>
          <circle cx="8" cy="8" r="6.500" fill="#7ad850" stroke="#1c3c14" strokeWidth="2" />
          <path d="M4 7q4-5 8 0z" fill="#d4f8c0" />
        </Ico>
        <span className="ml-1">Connected</span>
      </div>
      <div className="flex w-6 items-end justify-end">
        <Ico size={12} box={12}><path d="M1 12L12 1M5 12l7-7M9 12l3-3" stroke="#a09c88" /></Ico>
      </div>
    </footer>
  );
}

/* ---------- page ---------- */

export default function App() {
  return (
    <div className="flex h-screen w-full flex-col overflow-hidden bg-[#0a0608] font-['DejaVu_Sans_Condensed','DejaVu_Sans',sans-serif] text-[11px] leading-4 text-black">
      <TitleBar />
      <div className="flex min-h-0 flex-1">
        <div className="flex min-w-0 flex-1 flex-col">
          <div className="flex min-h-0 flex-1">
            <div className="flex w-[9px] shrink-0 border-r border-r-[#b0b0b0] bg-[#1c1416] pl-[3px]">
              <div className="w-px bg-linear-to-b from-[#a09894] to-[#d8d4d4]" />
            </div>
            <div className="flex min-w-0 flex-1 flex-col">
              <MenuBar />
              <MainToolbar />
              <main className="relative min-h-0 flex-1 bg-[#003366]">
                <BrowserWindow />
                <CytometerWindow />
                <Dashboard />
                <LoginPanel />
              </main>
            </div>
          </div>
          <Taskbar />
        </div>
        <div className="flex min-w-0 flex-1 flex-col">
          <div className="flex min-h-0 flex-1">
            <div className="flex min-w-0 flex-1 flex-col">
              <div className="h-[21px] shrink-0 border-b border-[#a0a0a0] bg-linear-to-b from-white from-30% via-[#dfe4f4] via-60% to-[#d6daee]" />
              <div className="h-7 shrink-0 border-b border-[#8a8a8a] bg-[#efefef]" />
              <div className="flex min-h-0 flex-1 flex-col bg-[#003366] pb-1">
                <WorksheetWindow />
              </div>
              <StatusBar />
            </div>
            <div className="w-[4px] shrink-0 border-l border-[#9fb4c4] bg-linear-to-b from-[#6f8296] via-[#1d5878] to-[#7fb0cc]" />
          </div>
          <div className="h-[9px] shrink-0 border-t border-b-2 border-t-[#222] border-b-[#0a1820] bg-[linear-gradient(90deg,#10202c_0%,#1c3c50_40%,#2f7c88_55%,#3fa8b0_69%,#7cbcd4_70%,#6f9cc0_100%)]" />
        </div>
      </div>
    </div>
  );
}
